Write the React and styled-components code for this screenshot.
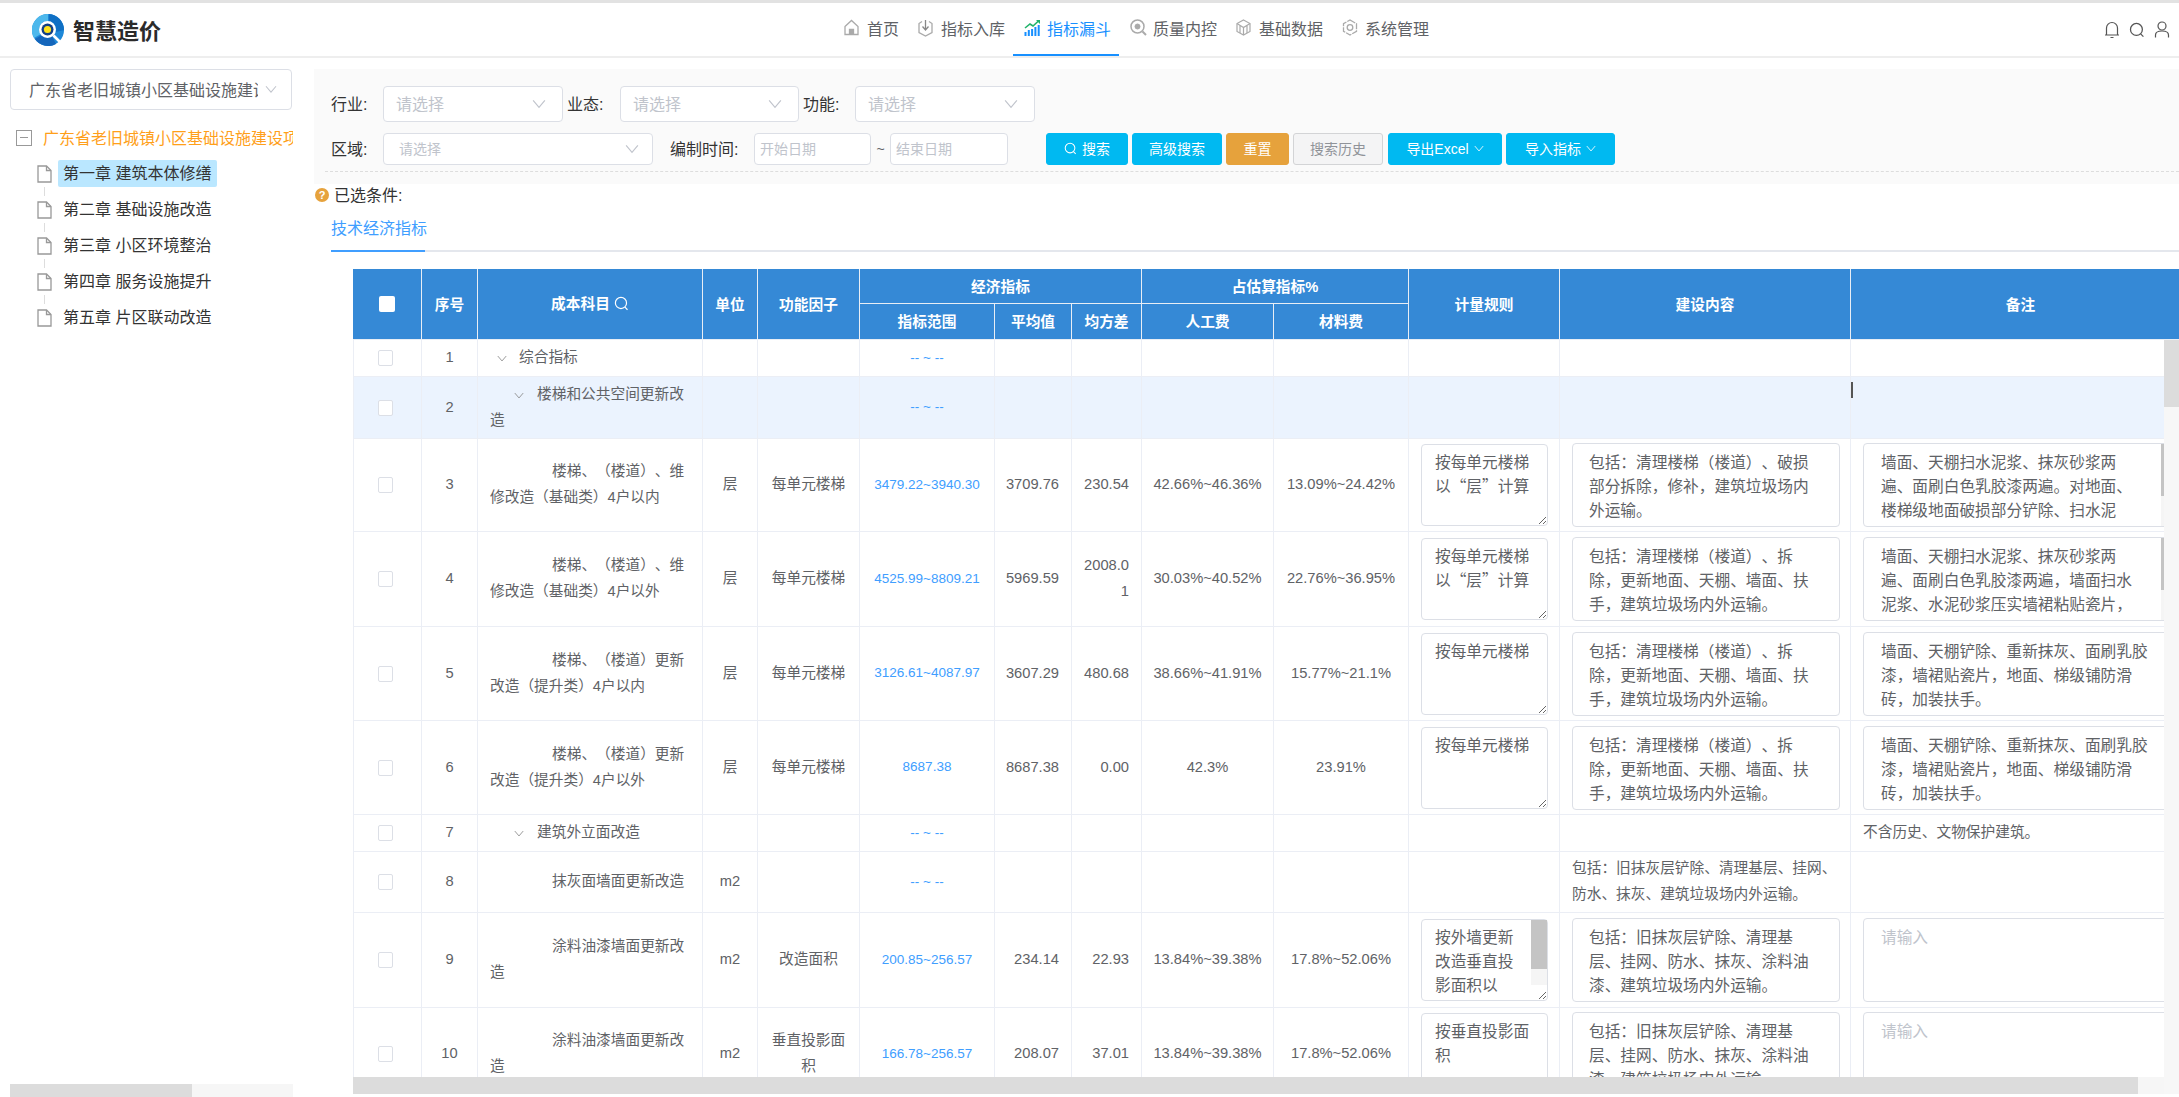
import styled, { createGlobalStyle } from "styled-components";

const FONT = `"Liberation Sans", "Noto Sans CJK SC", sans-serif`;
const CJK_FONT = `"Noto Sans CJK SC", "Liberation Sans", sans-serif`;

const GlobalStyle = createGlobalStyle`
  html, body {
    margin: 0;
    height: 100%;
    overflow: hidden;
    background: #fff;
    font-family: ${FONT};
  }
  #root {
    height: 100%;
  }
  * {
    box-sizing: border-box;
    text-spacing-trim: space-all;
  }
`;

const rows = [
  { no: 1, h: 37, level: 0, name: "综合指标", range: "-- ~ --" },
  { no: 2, h: 62, level: 1, name: "楼梯和公共空间更新改造", range: "-- ~ --", active: true },
  {
    no: 3,
    h: 93,
    name: "楼梯、（楼道）、维修改造（基础类）4户以内",
    unit: "层",
    factor: "每单元楼梯",
    range: "3479.22~3940.30",
    avg: "3709.76",
    dev: "230.54",
    labor: "42.66%~46.36%",
    material: "13.09%~24.42%",
    rule: "按每单元楼梯\n以“层”计算",
    content: "包括：清理楼梯（楼道）、破损\n部分拆除，修补，建筑垃圾场内\n外运输。",
    note: "墙面、天棚扫水泥浆、抹灰砂浆两\n遍、面刷白色乳胶漆两遍。对地面、\n楼梯级地面破损部分铲除、扫水泥\n浆、水泥砂浆压实，墙裙粘贴瓷片。",
    noteScroll: true,
  },
  {
    no: 4,
    h: 95,
    name: "楼梯、（楼道）、维修改造（基础类）4户以外",
    unit: "层",
    factor: "每单元楼梯",
    range: "4525.99~8809.21",
    avg: "5969.59",
    dev: "2008.01",
    labor: "30.03%~40.52%",
    material: "22.76%~36.95%",
    rule: "按每单元楼梯\n以“层”计算",
    content: "包括：清理楼梯（楼道）、拆\n除，更新地面、天棚、墙面、扶\n手，建筑垃圾场内外运输。",
    note: "墙面、天棚扫水泥浆、抹灰砂浆两\n遍、面刷白色乳胶漆两遍，墙面扫水\n泥浆、水泥砂浆压实墙裙粘贴瓷片，\n地面、梯级铺防滑砖，更换扶手。",
    noteScroll: true,
  },
  {
    no: 5,
    h: 94,
    name: "楼梯、（楼道）更新改造（提升类）4户以内",
    unit: "层",
    factor: "每单元楼梯",
    range: "3126.61~4087.97",
    avg: "3607.29",
    dev: "480.68",
    labor: "38.66%~41.91%",
    material: "15.77%~21.1%",
    rule: "按每单元楼梯",
    content: "包括：清理楼梯（楼道）、拆\n除，更新地面、天棚、墙面、扶\n手，建筑垃圾场内外运输。",
    note: "墙面、天棚铲除、重新抹灰、面刷乳胶\n漆，墙裙贴瓷片，地面、梯级铺防滑\n砖，加装扶手。",
  },
  {
    no: 6,
    h: 94,
    name: "楼梯、（楼道）更新改造（提升类）4户以外",
    unit: "层",
    factor: "每单元楼梯",
    range: "8687.38",
    avg: "8687.38",
    dev: "0.00",
    labor: "42.3%",
    material: "23.91%",
    rule: "按每单元楼梯",
    content: "包括：清理楼梯（楼道）、拆\n除，更新地面、天棚、墙面、扶\n手，建筑垃圾场内外运输。",
    note: "墙面、天棚铲除、重新抹灰、面刷乳胶\n漆，墙裙贴瓷片，地面、梯级铺防滑\n砖，加装扶手。",
  },
  { no: 7, h: 37, level: 1, name: "建筑外立面改造", range: "-- ~ --", plainNote: "不含历史、文物保护建筑。" },
  {
    no: 8,
    h: 61,
    name: "抹灰面墙面更新改造",
    unit: "m2",
    range: "-- ~ --",
    plainContent: "包括：旧抹灰层铲除、清理基层、挂网、防水、抹灰、建筑垃圾场内外运输。",
  },
  {
    no: 9,
    h: 95,
    name: "涂料油漆墙面更新改造",
    unit: "m2",
    factor: "改造面积",
    range: "200.85~256.57",
    avg: "234.14",
    dev: "22.93",
    labor: "13.84%~39.38%",
    material: "17.8%~52.06%",
    rule: "按外墙更新\n改造垂直投\n影面积以\n“m2”计\n算",
    ruleScroll: true,
    content: "包括：旧抹灰层铲除、清理基\n层、挂网、防水、抹灰、涂料油\n漆、建筑垃圾场内外运输。",
    note: "",
  },
  {
    no: 10,
    h: 93,
    name: "涂料油漆墙面更新改造",
    unit: "m2",
    factor: "垂直投影面积",
    range: "166.78~256.57",
    avg: "208.07",
    dev: "37.01",
    labor: "13.84%~39.38%",
    material: "17.8%~52.06%",
    rule: "按垂直投影面\n积",
    content: "包括：旧抹灰层铲除、清理基\n层、挂网、防水、抹灰、涂料油\n漆、建筑垃圾场内外运输。",
    note: "",
  },
];

const widths = [69, 56, 225, 55, 102, 135, 77, 70, 132, 135, 151, 291, 340];

const Chevron = ({ size = 14, color = "#c0c4cc" }) => (
  <svg width={size} height={size * 0.7} viewBox="0 0 14 10" fill="none" stroke={color} strokeWidth="1.2">
    <path d="M1 1.5 7 8.5 13 1.5" />
  </svg>
);

const SearchGlyph = ({ size = 14, color = "currentColor" }) => (
  <svg width={size} height={size} viewBox="0 0 14 14" fill="none" stroke={color} strokeWidth="1.1">
    <circle cx="6.5" cy="6.5" r="5.2" />
    <path d="M10.2 10.4 12.6 12.8" />
  </svg>
);

const Logo = () => (
  <svg width="32" height="32" viewBox="0 0 32 32">
    <circle cx="16" cy="16" r="16" fill="#1e88d8" />
    <path d="M16 0A16 16 0 0 0 2 24L9 20A8 8 0 0 1 16 7Z" fill="#4db8ec" />
    <path d="M3 25A16 16 0 0 0 24 30L20 22A9 9 0 0 1 10 21Z" fill="#1566bb" />
    <path d="M17 0A16 16 0 0 1 32 16L24 18A9 9 0 0 0 17 7Z" fill="#0f6fc4" />
    <circle cx="15.5" cy="15.5" r="8.5" fill="#fff" />
    <circle cx="15.5" cy="15.5" r="6" fill="#123f86" />
    <circle cx="15.5" cy="15.5" r="3.6" fill="#ffe21a" />
    <path d="M21.5 21.5 28 28" stroke="#fff" strokeWidth="2.6" />
  </svg>
);

const NavIcon = ({ name }) => {
  if (name === "home")
    return (
      <svg width="15" height="17" viewBox="0 0 15 17" fill="none" stroke="#aaa" strokeWidth="1.3">
        <path d="M1 7.5 7.5 1.5 14 7.5V15.5H1Z" />
        <path d="M5.5 15.5V10.5H9.5V15.5" fill="#aaa" />
      </svg>
    );
  if (name === "in")
    return (
      <svg width="15" height="18" viewBox="0 0 15 18" fill="none" stroke="#aaa" strokeWidth="1.3">
        <path d="M4 2.5 1 4.5V13.5L7.5 17 14 13.5V4.5L11 2.5" />
        <path d="M7.5 1V10M4.5 7.5 7.5 11 10.5 7.5" stroke="#888" />
      </svg>
    );
  if (name === "funnel")
    return (
      <svg width="17" height="17" viewBox="0 0 17 17">
        <path d="M1 9 6 5 9 7 15 1.5" fill="none" stroke="#21b36b" strokeWidth="1.6" />
        <path d="M12 1H16V5Z" fill="#21b36b" />
        <g fill="#1890ff">
          <rect x="0.5" y="13" width="2" height="4" />
          <rect x="3.8" y="11" width="2" height="6" />
          <rect x="7.1" y="10" width="2" height="7" />
          <rect x="10.4" y="8" width="2" height="9" />
          <rect x="13.7" y="6" width="2" height="11" />
        </g>
      </svg>
    );
  if (name === "quality")
    return (
      <svg width="17" height="17" viewBox="0 0 17 17" fill="none" stroke="#aaa">
        <circle cx="7.5" cy="7.5" r="6.5" strokeWidth="1.5" />
        <circle cx="7.5" cy="7.5" r="2.5" fill="#aaa" />
        <path d="M12.5 12.5 16 16" strokeWidth="2" />
      </svg>
    );
  if (name === "data")
    return (
      <svg width="15" height="17" viewBox="0 0 15 17" fill="none" stroke="#aaa" strokeWidth="1.2">
        <path d="M7.5 1 14 4.5V12.5L7.5 16 1 12.5V4.5Z" />
        <path d="M1 4.5 7.5 8.5 14 4.5M7.5 8.5V16M4 6.5V14M11 6.5V14" />
      </svg>
    );
  if (name === "system")
    return (
      <svg width="16" height="17" viewBox="0 0 16 17" fill="none" stroke="#aaa" strokeWidth="1.3">
        <path d="M8 1 14.5 4.7V12.3L8 16 1.5 12.3V4.7Z" strokeDasharray="6 1" />
        <circle cx="8" cy="8.5" r="2.8" />
      </svg>
    );
  return null;
};

const FileIcon = () => (
  <svg width="15" height="18" viewBox="0 0 15 18" fill="none" stroke="#999" strokeWidth="1.3">
    <path d="M1 1H9.5L14 5.5V17H1Z" />
    <path d="M9.5 1V5.5H14" />
  </svg>
);

const Page = styled.div`
  height: 100%;
  display: flex;
  flex-direction: column;
  color: #606266;
`;

const TopBar = styled.header`
  flex: none;
  height: 58px;
  display: flex;
  align-items: stretch;
  border-top: 3px solid #e2e2e2;
  border-bottom: 2px solid #eeeeee;
`;

const Brand = styled.div`
  width: 833px;
  padding-left: 32px;
  display: flex;
  align-items: center;
  gap: 9px;
  font-size: 22px;
  font-weight: 700;
  color: #2b2b2b;
  font-family: ${CJK_FONT};
`;

const BrandName = styled.span`
  margin-top: -2px;
`;

const Nav = styled.nav`
  display: flex;
`;

const NavItem = styled.div`
  display: flex;
  align-items: center;
  padding: 0 8px 2px 11px;
  font-size: 16px;
  color: ${({ $active }) => ($active ? "#1890ff" : "#606266")};
  border-bottom: 2px solid ${({ $active }) => ($active ? "#1890ff" : "transparent")};
`;

const NavIconBox = styled.span`
  width: 17px;
  margin-right: 6px;
  display: flex;
  justify-content: flex-start;
`;

const TopTools = styled.div`
  margin-left: auto;
  padding-right: 9px;
  display: flex;
  align-items: center;
  gap: 9px;
`;

const Body = styled.div`
  flex: 1;
  min-height: 0;
  display: flex;
`;

const Sidebar = styled.aside`
  flex: none;
  width: 314px;
  padding: 11px 0 0 10px;
  display: flex;
  flex-direction: column;
`;

const ProjectSelect = styled.div`
  width: 282px;
  height: 41px;
  padding: 0 14px 0 18px;
  display: flex;
  align-items: center;
  gap: 7px;
  border: 1px solid #dcdfe6;
  border-radius: 4px;
  font-size: 16px;
`;

const ProjectText = styled.span`
  flex: 1;
  margin-top: -2px;
  overflow: hidden;
  white-space: nowrap;
`;

const TreeClip = styled.div`
  flex: 1;
  min-height: 0;
  width: 283px;
  margin-top: 19px;
  overflow: hidden;
`;

const Tree = styled.div`
  width: 440px;
  padding-left: 6px;
`;

const RootNode = styled.div`
  display: flex;
  align-items: center;
  height: 17px;
  margin-bottom: 14px;
  white-space: nowrap;
  font-size: 16px;
  color: #ff9f1a;
`;

const RootText = styled.span`
  margin-top: -2px;
`;

const MinusBox = styled.span`
  width: 16px;
  height: 16px;
  margin-right: 11px;
  border: 1.5px solid #999;
  display: flex;
  align-items: center;
  justify-content: center;

  &::before {
    content: "";
    width: 8px;
    height: 1.5px;
    background: #999;
  }
`;

const ChildNode = styled.div`
  position: relative;
  height: 27px;
  margin: 0 0 9px 21px;
  display: flex;
  align-items: center;
  gap: 6px;

  &:not(:last-child)::after {
    content: "";
    position: absolute;
    left: 7px;
    top: 27px;
    height: 9px;
    border-left: 1px solid #ddd;
  }
`;

const ChildLabel = styled.span`
  height: 27px;
  padding: 0 6px 0 5px;
  line-height: 27px;
  border-radius: 2px;
  font-size: 16px;
  white-space: nowrap;
  color: #333;
  background: ${({ $selected }) => ($selected ? "#bae7ff" : "transparent")};
`;

const HBarTrack = styled.div`
  flex: none;
  width: ${({ $w }) => ($w ? `${$w}px` : "auto")};
  height: ${({ $h }) => $h}px;
  background: #f6f6f6;
`;

const HBarThumb = styled.div`
  width: ${({ $w }) => $w}px;
  height: 100%;
  background: #dcdcdc;
`;

const Main = styled.main`
  flex: 1;
  min-width: 0;
  padding-top: 11px;
  display: flex;
  flex-direction: column;
`;

const FilterPanel = styled.section`
  flex: none;
  height: 115px;
  padding: 17px 0 0 11px;
  background: #fafafa;
`;

const FilterForm = styled.div`
  height: 86px;
  padding-left: 6px;
  display: flex;
  flex-direction: column;
  gap: 11px;
  border-bottom: 1px dashed #dddddd;
`;

const FilterRow = styled.div`
  display: flex;
  align-items: center;
`;

const FieldLabel = styled.label`
  flex: none;
  width: ${({ $w }) => $w}px;
  margin-top: -2px;
  font-size: 16px;
  color: #333;
`;

const SelectBox = styled.div`
  flex: none;
  width: ${({ $w }) => $w}px;
  height: ${({ $small }) => ($small ? 32 : 36)}px;
  margin-right: ${({ $mr }) => $mr || 0}px;
  padding: 0 ${({ $small }) => ($small ? 13 : 16)}px 0 ${({ $small }) => ($small ? 15 : 12)}px;
  display: flex;
  align-items: center;
  justify-content: space-between;
  background: #fff;
  border: 1px solid #dcdfe6;
  border-radius: 4px;
  font-size: ${({ $small }) => ($small ? 14 : 16)}px;
  color: #c0c4cc;
`;

const SelectText = styled.span`
  margin-top: -2px;
`;

const DateInput = styled.input`
  flex: none;
  width: ${({ $w }) => $w}px;
  height: 32px;
  padding: 0 5px;
  border: 1px solid #dcdfe6;
  border-radius: 4px;
  background: #fff;
  font-family: ${FONT};
  font-size: 14px;

  &::placeholder {
    color: #c0c4cc;
  }
`;

const Tilde = styled.span`
  width: 19px;
  text-align: center;
  font-size: 14px;
`;

const ActionGroup = styled.div`
  margin-left: 38px;
  display: flex;
  gap: 4px;
`;

const ActionButton = styled.button`
  width: ${({ $w }) => $w}px;
  height: 32px;
  margin-left: ${({ $ml }) => $ml || 0}px;
  padding: 0 0 2px;
  display: flex;
  align-items: center;
  justify-content: center;
  gap: 5px;
  font-family: ${FONT};
  font-size: 14px;
  border-radius: 3px;
  border: 1px solid
    ${({ $kind }) => ($kind === "warn" ? "#e6a23c" : $kind === "plain" ? "#d3d4d6" : "#00b9f1")};
  background: ${({ $kind }) => ($kind === "warn" ? "#e6a23c" : $kind === "plain" ? "#f4f4f5" : "#00b9f1")};
  color: ${({ $kind }) => ($kind === "plain" ? "#909399" : "#fff")};
`;

const Conditions = styled.div`
  flex: none;
  height: 22px;
  padding: 0 0 2px 1px;
  display: flex;
  align-items: center;
  gap: 5px;
  font-size: 16px;
  color: #333;
`;

const HelpDot = styled.span`
  width: 14px;
  height: 14px;
  margin-top: 2px;
  border-radius: 50%;
  background: #e6a23c;
  color: #fff;
  font-size: 11px;
  font-weight: 700;
  line-height: 14px;
  text-align: center;
`;

const Tabs = styled.div`
  flex: none;
  margin-left: 17px;
  display: flex;
  border-bottom: 2px solid #e4e7ed;
`;

const Tab = styled.div`
  width: 94px;
  padding: 12px 0 10px;
  margin-bottom: -2px;
  white-space: nowrap;
  font-size: 16px;
  line-height: 22px;
  color: #409eff;
  border-bottom: 2px solid #409eff;
`;

const TableArea = styled.div`
  flex: 1;
  min-height: 0;
  margin: 17px 0 3px 39px;
  display: flex;
  flex-direction: column;
`;

const HeadClip = styled.div`
  flex: none;
  height: 71px;
  overflow: hidden;
`;

const BodyFrame = styled.div`
  flex: 1;
  min-height: 0;
  display: grid;
  grid-template-columns: minmax(0, 1fr) 15px;
  grid-template-rows: minmax(0, 1fr) 17px;
`;

const BodyViewport = styled.div`
  overflow: hidden;
`;

const VBarTrack = styled.div`
  background: #f7f7f7;
`;

const VBarThumb = styled.div`
  height: ${({ $h }) => $h}px;
  background: #dcdcdc;
`;

const BarCorner = styled.div`
  background: #f7f7f7;
`;

const GridTable = styled.table`
  width: 1838px;
  table-layout: fixed;
  border-collapse: separate;
  border-spacing: 0;
`;

const HeadCell = styled.th`
  padding: 0 0 2px;
  height: ${({ $h }) => $h}px;
  background: #3589d6;
  color: #fff;
  font-size: 14.7px;
  font-weight: 700;
  text-align: center;
  vertical-align: middle;
  border-right: 1px solid #e8eef5;
  border-bottom: 1px solid #e8eef5;
`;

const HeadCheck = styled.span`
  display: inline-block;
  width: 16px;
  height: 16px;
  border-radius: 2px;
  background: #fff;
  vertical-align: middle;
`;

const HeadSearch = styled.span`
  margin-left: 4px;
  vertical-align: -2px;
  font-weight: 400;
`;

const Row = styled.tr`
  background: ${({ $active }) => ($active ? "#ebf3fe" : "#fff")};
`;

const Cell = styled.td`
  position: relative;
  padding: ${({ $pad }) => $pad || "0 12px"};
  padding-bottom: ${({ $area }) => ($area ? 0 : 2)}px;
  height: ${({ $h }) => $h}px;
  font-size: 14.7px;
  line-height: 26px;
  color: #606266;
  text-align: ${({ $align }) => $align || "center"};
  vertical-align: middle;
  word-break: break-all;
  border-right: 1px solid #ebeef5;
  border-bottom: 1px solid #ebeef5;

  &:first-child {
    border-left: 1px solid #ebeef5;
  }
`;

const RowCheck = styled.span`
  display: inline-block;
  width: 15px;
  height: 16px;
  margin-right: 4px;
  background: #fff;
  border: 1px solid #dcdfe6;
  border-radius: 2px;
  vertical-align: middle;
`;

const Indent = styled.span`
  display: inline-flex;
  align-items: center;
  width: ${({ $w }) => $w}px;
  padding-left: ${({ $pad }) => $pad || 0}px;
`;

const RangeLink = styled.a`
  color: #409eff;
  font-size: 13.5px;
`;

const AreaWrap = styled.div`
  position: relative;
  width: ${({ $w }) => $w}px;
  line-height: 0;
`;

const AreaBase = styled.textarea`
  display: block;
  width: 100%;
  overflow: hidden;
  border: 1px solid #dcdfe6;
  border-radius: 4px;
  background: #fff;
  color: #606266;
  font-family: ${CJK_FONT};
  font-size: 15.7px;
  line-height: 24px;
  outline: none;

  &::placeholder {
    color: #c0c4cc;
  }
`;

const RuleArea = styled(AreaBase)`
  height: 82px;
  padding: 5px 4px 5px 13px;
  resize: vertical;
`;

const ContentArea = styled(AreaBase)`
  height: 84px;
  padding: 6px 4px 6px 16px;
  resize: none;
`;

const NoteArea = styled(AreaBase)`
  height: 84px;
  padding: 6px 2px 6px 17px;
  resize: none;
`;

const AreaBar = styled.div`
  position: absolute;
  top: 1px;
  right: 1px;
  width: 16px;
  height: ${({ $h }) => $h}px;
  background: #f5f5f5;
`;

const AreaThumb = styled.div`
  height: ${({ $h }) => $h}px;
  background: #c4c4c4;
`;

const Caret = styled.span`
  position: absolute;
  left: 0;
  top: 5px;
  width: 2px;
  height: 16px;
  background: #555;
`;

const nav = [
  ["home", "首页"],
  ["in", "指标入库"],
  ["funnel", "指标漏斗", true],
  ["quality", "质量内控"],
  ["data", "基础数据"],
  ["system", "系统管理"],
];

const chapters = [
  "第一章 建筑本体修缮",
  "第二章 基础设施改造",
  "第三章 小区环境整治",
  "第四章 服务设施提升",
  "第五章 片区联动改造",
];

const Columns = () => (
  <colgroup>
    {widths.map((w, i) => (
      <col key={i} width={w} />
    ))}
  </colgroup>
);

const Subject = ({ row }) => {
  if (row.level === 0 || row.level === 1) {
    const pad = row.level === 0 ? 7 : 24;
    const w = row.level === 0 ? 29 : 47;
    return (
      <>
        <Indent $w={w} $pad={pad}>
          <Chevron size={10} color="#888" />
        </Indent>
        {row.name}
      </>
    );
  }
  return (
    <>
      <Indent $w={62} />
      {row.name}
    </>
  );
};

const TableRow = ({ row }) => (
  <Row $active={row.active}>
    <Cell $h={row.h}>
      <RowCheck />
    </Cell>
    <Cell $h={row.h}>{row.no}</Cell>
    <Cell $h={row.h} $align="left">
      <Subject row={row} />
    </Cell>
    <Cell $h={row.h} $pad="0 6px">{row.unit}</Cell>
    <Cell $h={row.h}>{row.factor}</Cell>
    <Cell $h={row.h} $pad="0 6px">
      <RangeLink>{row.range}</RangeLink>
    </Cell>
    <Cell $h={row.h} $align="right" $pad="0 12px 0 6px">{row.avg}</Cell>
    <Cell $h={row.h} $align="right">{row.dev}</Cell>
    <Cell $h={row.h} $pad="0 6px">{row.labor}</Cell>
    <Cell $h={row.h} $pad="0 6px">{row.material}</Cell>
    <Cell $h={row.h} $area>
      {row.rule && (
        <AreaWrap $w={127}>
          <RuleArea defaultValue={row.rule} />
          {row.ruleScroll && (
            <AreaBar $h={65}>
              <AreaThumb $h={49} />
            </AreaBar>
          )}
        </AreaWrap>
      )}
    </Cell>
    <Cell $h={row.h} $align="left" $area={!row.plainContent}>
      {row.content && (
        <AreaWrap $w={268}>
          <ContentArea defaultValue={row.content} />
        </AreaWrap>
      )}
      {row.plainContent}
    </Cell>
    <Cell $h={row.h} $align="left" $area={!row.plainNote}>
      {row.active && <Caret />}
      {row.note !== undefined && (
        <AreaWrap $w={315}>
          <NoteArea defaultValue={row.note} placeholder="请输入" />
          {row.noteScroll && (
            <AreaBar $h={82}>
              <AreaThumb $h={52} />
            </AreaBar>
          )}
        </AreaWrap>
      )}
      {row.plainNote}
    </Cell>
  </Row>
);

const App = () => (
  <Page>
    <GlobalStyle />
    <TopBar>
      <Brand>
        <Logo />
        <BrandName>智慧造价</BrandName>
      </Brand>
      <Nav>
        {nav.map(([icon, label, active]) => (
          <NavItem key={label} $active={active}>
            <NavIconBox>
              <NavIcon name={icon} />
            </NavIconBox>
            {label}
          </NavItem>
        ))}
      </Nav>
      <TopTools>
        <svg width="16" height="18" viewBox="0 0 16 18" fill="none" stroke="#555" strokeWidth="1.2">
          <path d="M2.5 14V7A5.5 5.5 0 0 1 13.5 7V14ZM1 14H15M6.5 16.5H9.5" />
        </svg>
        <SearchGlyph size={16} color="#555" />
        <svg width="16" height="17" viewBox="0 0 16 17" fill="none" stroke="#555" strokeWidth="1.2">
          <circle cx="8" cy="5" r="4" />
          <path d="M1.5 16.5V14C1.5 11.5 4 10 8 10S14.5 11.5 14.5 14V16.5" />
        </svg>
      </TopTools>
    </TopBar>
    <Body>
      <Sidebar>
        <ProjectSelect>
          <ProjectText>广东省老旧城镇小区基础设施建设项目</ProjectText>
          <Chevron size={12} />
        </ProjectSelect>
        <TreeClip>
          <Tree>
            <RootNode>
              <MinusBox />
              <RootText>广东省老旧城镇小区基础设施建设项目</RootText>
            </RootNode>
            {chapters.map((c, i) => (
              <ChildNode key={c}>
                <FileIcon />
                <ChildLabel $selected={i === 0}>{c}</ChildLabel>
              </ChildNode>
            ))}
          </Tree>
        </TreeClip>
        <HBarTrack $w={283} $h={13}>
          <HBarThumb $w={182} />
        </HBarTrack>
      </Sidebar>
      <Main>
        <FilterPanel>
          <FilterForm>
            <FilterRow>
              <FieldLabel $w={52}>行业:</FieldLabel>
              <SelectBox $w={180} $mr={4}>
                <SelectText>请选择</SelectText>
                <Chevron />
              </SelectBox>
              <FieldLabel $w={53}>业态:</FieldLabel>
              <SelectBox $w={179} $mr={4}>
                <SelectText>请选择</SelectText>
                <Chevron />
              </SelectBox>
              <FieldLabel $w={52}>功能:</FieldLabel>
              <SelectBox $w={180}>
                <SelectText>请选择</SelectText>
                <Chevron />
              </SelectBox>
            </FilterRow>
            <FilterRow>
              <FieldLabel $w={52}>区域:</FieldLabel>
              <SelectBox $w={270} $mr={17} $small>
                <SelectText>请选择</SelectText>
                <Chevron />
              </SelectBox>
              <FieldLabel $w={84}>编制时间:</FieldLabel>
              <DateInput $w={117} placeholder="开始日期" />
              <Tilde>~</Tilde>
              <DateInput $w={118} placeholder="结束日期" />
              <ActionGroup>
                <ActionButton $w={82}>
                  <SearchGlyph size={13} />
                  搜索
                </ActionButton>
                <ActionButton $w={90}>高级搜索</ActionButton>
                <ActionButton $w={63} $kind="warn">重置</ActionButton>
                <ActionButton $w={90} $kind="plain">搜索历史</ActionButton>
                <ActionButton $w={114} $ml={1}>
                  导出Excel
                  <Chevron size={10} color="#fff" />
                </ActionButton>
                <ActionButton $w={109}>
                  导入指标
                  <Chevron size={10} color="#fff" />
                </ActionButton>
              </ActionGroup>
            </FilterRow>
          </FilterForm>
        </FilterPanel>
        <Conditions>
          <HelpDot>?</HelpDot>
          已选条件:
        </Conditions>
        <Tabs>
          <Tab>技术经济指标</Tab>
        </Tabs>
        <TableArea>
          <HeadClip>
            <GridTable>
              <Columns />
              <thead>
                <tr>
                  <HeadCell rowSpan={2}>
                    <HeadCheck />
                  </HeadCell>
                  <HeadCell rowSpan={2}>序号</HeadCell>
                  <HeadCell rowSpan={2}>
                    成本科目
                    <HeadSearch>
                      <SearchGlyph size={15} />
                    </HeadSearch>
                  </HeadCell>
                  <HeadCell rowSpan={2}>单位</HeadCell>
                  <HeadCell rowSpan={2}>功能因子</HeadCell>
                  <HeadCell colSpan={3} $h={35}>经济指标</HeadCell>
                  <HeadCell colSpan={2} $h={35}>占估算指标%</HeadCell>
                  <HeadCell rowSpan={2}>计量规则</HeadCell>
                  <HeadCell rowSpan={2}>建设内容</HeadCell>
                  <HeadCell rowSpan={2}>备注</HeadCell>
                </tr>
                <tr>
                  <HeadCell $h={36}>指标范围</HeadCell>
                  <HeadCell $h={36}>平均值</HeadCell>
                  <HeadCell $h={36}>均方差</HeadCell>
                  <HeadCell $h={36}>人工费</HeadCell>
                  <HeadCell $h={36}>材料费</HeadCell>
                </tr>
              </thead>
            </GridTable>
          </HeadClip>
          <BodyFrame>
            <BodyViewport>
              <GridTable>
                <Columns />
                <tbody>
                  {rows.map((row) => (
                    <TableRow key={row.no} row={row} />
                  ))}
                </tbody>
              </GridTable>
            </BodyViewport>
            <VBarTrack>
              <VBarThumb $h={67} />
            </VBarTrack>
            <HBarTrack $h={17}>
              <HBarThumb $w={1785} />
            </HBarTrack>
            <BarCorner />
          </BodyFrame>
        </TableArea>
      </Main>
    </Body>
  </Page>
);

export default App;
